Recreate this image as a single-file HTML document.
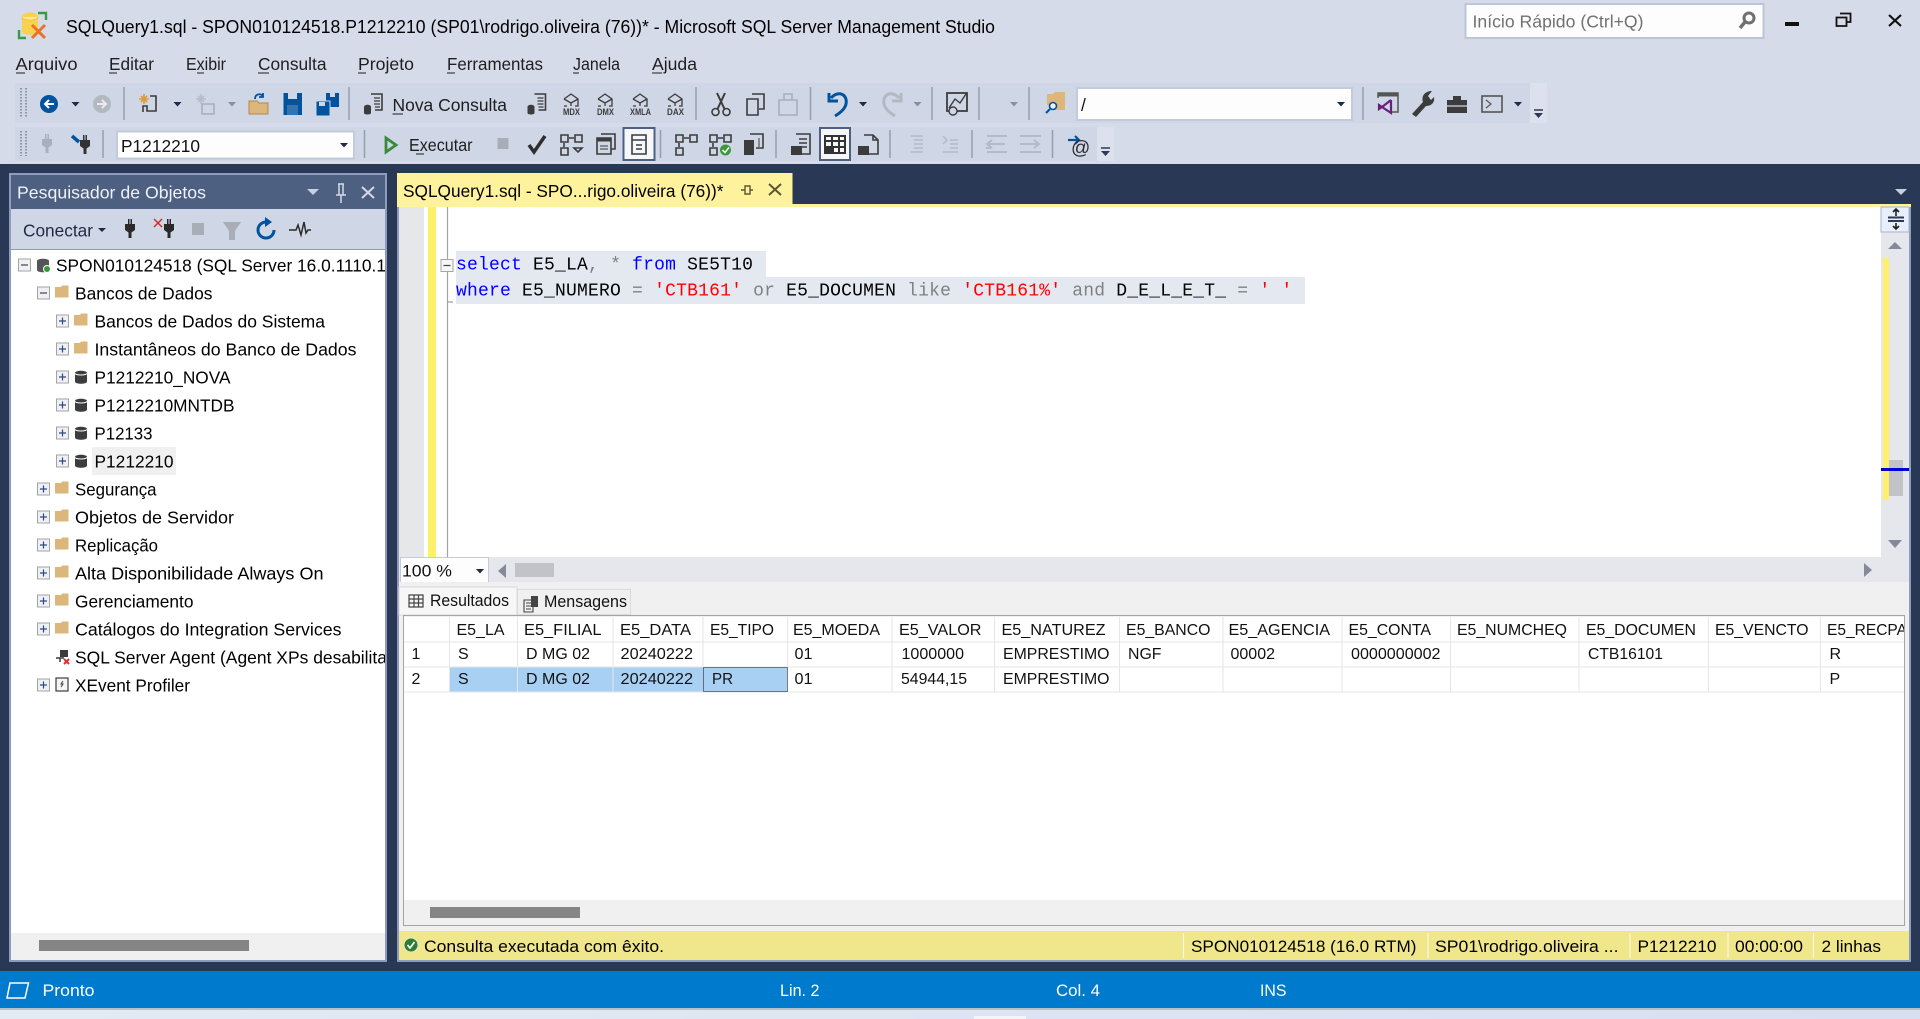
<!DOCTYPE html>
<html lang="pt">
<head>
<meta charset="utf-8">
<title>SQLQuery1.sql - Microsoft SQL Server Management Studio</title>
<style>
html,body{margin:0;padding:0;width:1920px;height:1019px;overflow:hidden;background:#d6dbe9}
svg{display:block;position:absolute;left:0;top:0}
text{font-family:"Liberation Sans",sans-serif;fill:#000;white-space:pre}
.ti{font-size:18px}
.m{font-size:17.5px;fill:#1e1e1e}
.tr{font-size:17.5px}
.g{font-size:16px;fill:#111}
.s{font-size:17px}
.w{font-size:17px;fill:#fff}
.c{font-family:"Liberation Mono",monospace;font-size:18px;letter-spacing:.2px}
.k{fill:#0000ff}.o{fill:#808080}.r{fill:#ff0000}
.ic{fill:none;stroke:#3c3c3c;stroke-width:1.6}
.dis{fill:none;stroke:#a9afbb;stroke-width:1.6}
.mini{font-size:9.500px;font-weight:bold;fill:#3c3c3c;font-family:"Liberation Sans",sans-serif}
</style>
</head>
<body>
<svg width="1920" height="1019" viewBox="0 0 1920 1019" xmlns="http://www.w3.org/2000/svg">
<defs>
<linearGradient id="desk" x1="0" x2="1" y1="0" y2="0"><stop offset="0" stop-color="#e2ebf4"/><stop offset="1" stop-color="#d8dff0"/></linearGradient>
<clipPath id="treeclip"><rect x="12" y="250" width="373" height="680"/></clipPath>
<clipPath id="gridclip"><rect x="403" y="617" width="1501" height="283"/></clipPath>
<g id="plus"><rect x="-6" y="-6" width="12" height="12" fill="#eef0f5" stroke="#a3a3a3"/><path d="M-3.5 0H3.5M0-3.5V3.5" stroke="#2c4a80" stroke-width="1.2"/></g>
<g id="minus"><rect x="-6" y="-6" width="12" height="12" fill="#eef0f5" stroke="#a3a3a3"/><path d="M-3.5 0H3.5" stroke="#444" stroke-width="1.2"/></g>
<path id="folder" d="M-7-5H-1L0-6.500H6.500V5.500H-7Z" fill="#dcb67a"/>
<g id="db"><path d="M-6-4C-6-7 6-7 6-4V4.500C6 7.500-6 7.500-6 4.500Z" fill="#3c3c3c"/><path d="M-6-3.500C-4-1.500 4-1.500 6-3.500" stroke="#fff" fill="none" stroke-width="1"/></g>
<path id="dn" d="M-4-2H4L0 2.500Z" fill="#1e2b45"/>
<path id="dndis" d="M-4-2H4L0 2.500Z" fill="#8a8f9c"/>
<g id="plug"><path d="M-5-5H-2V-10H-.5V-5H.5V-10H2V-5H5V1L1.500 3.500V9H-1.500V3.500L-5 1Z"/></g>
<g id="cube"><path d="M-7-4L0-9L7-4V3H4M-4 3H-7ZM-7-4L0 0L7-4M0 0V3" fill="none" stroke="#3c3c3c" stroke-width="1.300"/></g>
</defs>

<rect width="1920" height="1019" fill="#d6dbe9"/>

<!-- Title bar -->
<g>
<path d="M22 17C22 11 38 11 38 17V31C38 36 22 36 22 31Z" fill="#f8d24b"/>
<path d="M22 17C22 21 38 21 38 17" fill="#fbe69a" stroke="#e9b530" stroke-width=".6"/>
<path d="M38 13H46V20M19 30V38H26" fill="none" stroke="#3a9a46" stroke-width="2.4"/>
<path d="M32 25L45 38M45 25L32 38" stroke="#e8722a" stroke-width="3"/>
</g>
<text class="ti" x="66" y="33" textLength="929" lengthAdjust="spacingAndGlyphs">SQLQuery1.sql - SPON010124518.P1212210 (SP01\rodrigo.oliveira (76))* - Microsoft SQL Server Management Studio</text>

<rect x="1465.500" y="4" width="298" height="34" fill="#fdfdfe" stroke="#bcc5d8" stroke-width="2"/>
<text class="m" style="fill:#717171" x="1472.500" y="27.500" textLength="171" lengthAdjust="spacingAndGlyphs">Início Rápido (Ctrl+Q)</text>
<circle cx="1749" cy="18" r="5" fill="none" stroke="#6f6f6f" stroke-width="3"/><path d="M1745 22L1740 28" stroke="#6f6f6f" stroke-width="3.500"/>
<rect x="1785" y="22" width="14" height="4" fill="#111"/>
<path d="M1840 13.500H1850.500V22H1847M1836.500 17.500H1846.500V26H1836.500Z" fill="none" stroke="#111" stroke-width="1.800"/>
<path d="M1889 15L1901 26M1901 15L1889 26" stroke="#111" stroke-width="2.200"/>

<!-- Menu -->
<g class="menu">
<text class="m" x="15.500" y="70" textLength="62" lengthAdjust="spacingAndGlyphs">Arquivo</text>
<text class="m" x="109" y="70" textLength="45" lengthAdjust="spacingAndGlyphs">Editar</text>
<text class="m" x="186" y="70" textLength="40" lengthAdjust="spacingAndGlyphs">Exibir</text>
<text class="m" x="258" y="70" textLength="68.500" lengthAdjust="spacingAndGlyphs">Consulta</text>
<text class="m" x="358" y="70" textLength="56" lengthAdjust="spacingAndGlyphs">Projeto</text>
<text class="m" x="447" y="70" textLength="96" lengthAdjust="spacingAndGlyphs">Ferramentas</text>
<text class="m" x="573" y="70" textLength="47" lengthAdjust="spacingAndGlyphs">Janela</text>
<text class="m" x="652" y="70" textLength="45" lengthAdjust="spacingAndGlyphs">Ajuda</text>
<path d="M16 73H25M109 73H117M197 73H204M258 73H269M358 73H366M447 73H455M573 73H579M652 73H662" stroke="#1e1e1e" stroke-width="1"/>
</g>

<!-- Toolbar 1 -->
<rect x="15" y="83" width="1515" height="40" fill="#cfd6e5"/>
<rect x="1530" y="83" width="17" height="40" fill="#dde1ee"/>
<path d="M21 88V117M26 88V117" stroke="#8e95a6" stroke-width="2" stroke-dasharray="1.500 1.500"/>
<circle cx="49" cy="104" r="9" fill="#00539c"/><path d="M54 104H45M49 100L45 104L49 108" fill="none" stroke="#fff" stroke-width="2"/>
<use href="#dn" x="75.500" y="104"/>
<circle cx="102" cy="104" r="9" fill="#b3b8c1"/><path d="M97 104H106M102 100L106 104L102 108" fill="none" stroke="#e8eaef" stroke-width="2"/>
<path d="M124 87V120M349 87V120M696 87V120M810.500 87V120M932 87V120M979 87V120M1029 87V120M1363 87V120" stroke="#94a0b4" stroke-width="1.500"/>
<!-- new project -->
<g transform="translate(149,104)"><path d="M-8-8L-2-2M-8-2L-2-8M-5-10V0M-10-5H0" stroke="#dd9b3c" stroke-width="1.600"/><path d="M1-8H7V7H-2V2H-6V8" class="ic"/></g>
<use href="#dn" x="177.500" y="104"/>
<g transform="translate(206,104)"><path d="M-8-8L-2-2M-8-2L-2-8M-5-10V0M-10-5H0" stroke="#b8bec9" stroke-width="1.600"/><path d="M-4 0H8V10H-4Z" class="dis"/></g>
<use href="#dndis" x="232" y="104"/>
<g transform="translate(259,105)"><path d="M-10 9V-4H-2L0-2H9V9Z" fill="#dcb67a" stroke="#b08a4c"/><path d="M-4-6C-4-11 1-12 4-9M4-12V-8H0" fill="none" stroke="#00539c" stroke-width="1.800"/></g>
<path d="M283.500 93H302V115H283.500Z" fill="#00539c"/><rect x="288" y="93" width="9" height="6" fill="#cfd6e5"/><rect x="287" y="105" width="11" height="10" fill="#cfd6e5" opacity=".25"/>
<path d="M326 93H339V107H326Z" fill="#00539c"/><path d="M316 101H330V116H316Z" fill="#00539c" stroke="#cfd6e5"/><rect x="330" y="93" width="5" height="4" fill="#cfd6e5"/><rect x="319" y="102" width="6" height="4" fill="#cfd6e5"/>
<!-- Nova Consulta -->
<g transform="translate(374,104)"><path d="M-3-10H8V6H1" fill="none" stroke="#3c3c3c" stroke-width="1.600"/><path d="M0-6H6M0-3H6M0 0H6M1 3H6" stroke="#3c3c3c" stroke-width="1.300"/><path d="M-10 3C-10 0-3 0-3 3V9C-3 11-10 11-10 9Z" fill="#3c3c3c"/></g>
<text class="m" x="392.500" y="111" textLength="114.500" lengthAdjust="spacingAndGlyphs">Nova Consulta</text>
<path d="M392.500 114H403" stroke="#1e1e1e"/>
<g transform="translate(537.500,104)"><path d="M-3-10H8V6H1" fill="none" stroke="#3c3c3c" stroke-width="1.600"/><path d="M0-6H6M0-3H6M0 0H6M1 3H6" stroke="#3c3c3c" stroke-width="1.300"/><path d="M-10 3C-10 0-3 0-3 3V9C-3 11-10 11-10 9Z" fill="#3c3c3c"/></g>
<use href="#cube" x="571" y="103"/><text class="mini" x="563" y="115" textLength="17" lengthAdjust="spacingAndGlyphs">MDX</text>
<use href="#cube" x="605" y="103"/><text class="mini" x="597" y="115" textLength="17" lengthAdjust="spacingAndGlyphs">DMX</text>
<use href="#cube" x="640" y="103"/><text class="mini" x="630" y="115" textLength="21" lengthAdjust="spacingAndGlyphs">XMLA</text>
<use href="#cube" x="675" y="103"/><text class="mini" x="667" y="115" textLength="17" lengthAdjust="spacingAndGlyphs">DAX</text>
<g transform="translate(721,104)"><circle cx="-5.500" cy="8" r="3.500" class="ic"/><circle cx="5.500" cy="8" r="3.500" class="ic"/><path d="M-3.500 5L4-11M3.500 5L-4-11" stroke="#3c3c3c" stroke-width="2"/></g>
<path d="M752 94H764V109H759M747 99H758V115H747Z" class="ic"/>
<path d="M779 100H797V115H779ZM784 100V94H792V100" class="dis"/>
<path d="M831 98C838 90 848 94 846 104C845 109 840 113 835 116M829 93V101H838" fill="none" stroke="#00539c" stroke-width="3"/>
<use href="#dn" x="863" y="104"/>
<path d="M899 98C892 90 882 94 884 104C885 109 890 113 895 116M901 93V101H892" fill="none" stroke="#b3b8c1" stroke-width="3"/>
<use href="#dndis" x="917.500" y="104"/>
<rect x="947" y="93" width="20" height="18" fill="none" stroke="#3c3c3c" stroke-width="1.800"/>
<path d="M949 108L955 99L960 103L966 94" fill="none" stroke="#3c3c3c" stroke-width="1.400"/>
<circle cx="953" cy="111" r="4" fill="#cfd6e5" stroke="#3c3c3c" stroke-width="1.400"/>
<use href="#dndis" x="1014" y="104"/>
<path d="M1047 94H1053L1055 92H1065V110H1053V105H1047Z" fill="#dcb67a"/>
<circle cx="1053" cy="106" r="3.500" fill="#eef0f5" stroke="#00539c" stroke-width="1.600"/><path d="M1050 109L1046 113" stroke="#00539c" stroke-width="2"/>
<rect x="1077" y="88" width="275" height="32" fill="#fdfdfe" stroke="#c2cadc" stroke-width="2"/>
<text class="m" x="1081" y="111" style="fill:#111">/</text>
<use href="#dn" x="1341" y="104"/>
<g transform="translate(1388,104)"><path d="M-10-6V-11H10V8H4" fill="none" stroke="#555" stroke-width="1.500"/><rect x="-10" y="-11" width="20" height="3.500" fill="#555"/><path d="M3-4V9L-9 1V5L-4 1.500L3-4" fill="none" stroke="#68217a" stroke-width="2.200"/></g>
<path d="M1412 114L1423 102C1421 96 1425 91 1432 91L1428 96L1431 100L1434 97C1435 103 1431 106 1426 106L1416 117Z" fill="#3c3c3c"/>
<path d="M1447 100H1467V113H1447ZM1453 100V96H1461V100" fill="#3c3c3c"/><path d="M1447 106H1467" stroke="#cfd6e5" stroke-width="1.300"/>
<rect x="1482" y="96" width="20" height="16" fill="none" stroke="#555" stroke-width="1.600"/><path d="M1486 100L1491 104L1486 108" fill="none" stroke="#555" stroke-width="1.200"/>
<use href="#dn" x="1518" y="104"/>
<path d="M1534 110H1543" stroke="#2c3a55" stroke-width="1.500"/><path d="M1534 113H1543L1538.500 118Z" fill="#2c3a55"/>

<!-- Toolbar 2 -->
<rect x="15" y="127" width="1082" height="34" fill="#cfd6e5"/>
<rect x="1097" y="127" width="17" height="34" fill="#dde1ee"/>
<path d="M21 131V156M26 131V156" stroke="#8e95a6" stroke-width="2" stroke-dasharray="1.500 1.500"/>
<use href="#plug" x="47" y="144" fill="#aab0bb"/>
<use href="#plug" x="85" y="145" fill="#333"/><path d="M72 136L79 142" stroke="#00539c" stroke-width="3.500"/>
<path d="M103 130V158M364.500 130V158M660.500 130V158M776 130V158M890 130V158M972 130V158M1052.500 130V158" stroke="#94a0b4" stroke-width="1.500"/>
<rect x="117" y="131.500" width="237" height="27" fill="#fdfdfe" stroke="#c2cadc" stroke-width="2"/>
<text class="m" style="fill:#111" x="121" y="152" textLength="79" lengthAdjust="spacingAndGlyphs">P1212210</text>
<use href="#dn" x="344" y="145"/>
<path d="M386 138L396 145L386 152Z" fill="none" stroke="#3a8a3a" stroke-width="2.800"/>
<text class="m" x="409" y="151" textLength="63.500" lengthAdjust="spacingAndGlyphs">Executar</text><path d="M416 154H424" stroke="#1e1e1e"/>
<rect x="497.500" y="138" width="11" height="11" fill="#a8adb7"/>
<path d="M529 145L534 152L545 136" fill="none" stroke="#2e2e2e" stroke-width="3.500"/>
<path d="M561 135H568V142H561ZM575 135H582V142H575ZM561 148H568V155H561ZM564 147V143M569 138H574" class="ic" stroke-width="1.300"/><path d="M574 148H582L578 152Z" class="ic" stroke-width="1.300"/>
<path d="M601 134H615V149H611M597 138H611V154H597Z" class="ic"/><rect x="597" y="138" width="14" height="3.500" fill="#3c3c3c"/><path d="M600 146H608M600 149H608" stroke="#3c3c3c"/>
<rect x="623.500" y="128" width="31" height="32" fill="#f6f7fa" stroke="#4d6082" stroke-width="2"/>
<path d="M632 135H646V154H632ZM632 140H646M636 145H642M636 149H642" class="ic" stroke-width="1.400"/>
<path d="M676 135H683V142H676ZM690 135H697V142H690ZM676 148H683V155H676ZM679 147V143M684 138H689" class="ic" stroke-width="1.300"/>
<path d="M710 135H717V142H710ZM724 135H731V142H724ZM710 148H717V155H710ZM713 147V143M718 138H723" class="ic" stroke-width="1.300"/>
<circle cx="725.500" cy="150" r="5.500" fill="#3a9a3a"/><path d="M722.500 150L725 152.500L729 147.500" fill="none" stroke="#fff" stroke-width="1.500"/>
<rect x="744" y="140" width="10" height="15" fill="#3c3c3c"/><path d="M750 134H763V148H756" class="ic"/><path d="M759 138V147" stroke="#3c3c3c"/>
<path d="M796 134H810V154H801M799 139H807M799 143H807M799 147H807" class="ic" stroke-width="1.300"/><rect x="791" y="146" width="11" height="9" fill="#3c3c3c"/>
<rect x="820" y="128" width="30" height="32" fill="#f6f7fa" stroke="#4d6082" stroke-width="2"/>
<path d="M825 136H845V153H825ZM825 141H845M825 147H845M832 136V153M839 136V153" fill="none" stroke="#333" stroke-width="2"/><rect x="825" y="147" width="9" height="7" fill="#333"/>
<path d="M864 135H873L878 140V154H869M873 135V140H878" class="ic"/><rect x="858" y="146" width="11" height="9" fill="#3c3c3c"/>
<path d="M911 136H923M914 140H923M914 144H923M914 148H923M911 152H923" stroke="#b4bac6" stroke-width="1.500"/>
<path d="M943 136L947 140L943 144M950 140H958M950 144H958M950 148H958M943 152H958" fill="none" stroke="#b4bac6" stroke-width="1.500"/>
<path d="M987 136H1007M987 152H1007M987 144H1005M992 140L987 144L992 148M991 148H986" fill="none" stroke="#b4bac6" stroke-width="2"/>
<path d="M1020 136H1041M1020 152H1041M1020 144H1038M1034 140L1039 144L1034 148" fill="none" stroke="#b4bac6" stroke-width="2"/>
<path d="M1068 140H1079M1075 136L1079 140L1075 144" fill="none" stroke="#00539c" stroke-width="2.200"/>
<text x="1071" y="154" style="font-size:19px;fill:#2e2e2e">@</text>
<path d="M1101 148H1110" stroke="#2c3a55" stroke-width="1.500"/><path d="M1101 151H1110L1105.500 156Z" fill="#2c3a55"/>

<!-- Dark main background -->
<rect x="0" y="164" width="1920" height="807" fill="#293955"/>

<!-- Object Explorer -->
<rect x="9" y="173" width="378" height="789" fill="#8d9cbd"/>
<rect x="11" y="175" width="374" height="34" fill="#4d6082"/>
<text class="tr" style="fill:#eef1f7" x="17" y="198.500" textLength="189" lengthAdjust="spacingAndGlyphs">Pesquisador de Objetos</text>
<path d="M307 189H319L313 195Z" fill="#c9d0df"/>
<path d="M338 184H344M339 184V195H343V184M336 195H346M341 195V203" fill="none" stroke="#d5dae6" stroke-width="1.500"/>
<path d="M362 187L374 198M374 187L362 198" stroke="#d5dae6" stroke-width="2"/>
<rect x="11" y="209" width="374" height="40" fill="#cfd6e5"/>
<text class="m" style="fill:#1e2b45" x="23" y="236.500" textLength="70" lengthAdjust="spacingAndGlyphs">Conectar</text>
<path d="M98 228H106L102 232Z" fill="#1e2b45"/>
<use href="#plug" x="130" y="229" fill="#2a2a2a"/>
<use href="#plug" x="169" y="229" fill="#2a2a2a"/><path d="M154 219L162 227M162 219L154 227" stroke="#c9302c" stroke-width="1.500"/>
<rect x="192" y="223" width="12" height="12" fill="#a8adb7"/>
<path d="M223 222H241L235 231V240H229V231Z" fill="#a8adb7"/>
<path d="M274 230A8 8 0 1 1 266 222" fill="none" stroke="#00539c" stroke-width="3"/><path d="M265 217L272 222L265 227Z" fill="#00539c"/>
<path d="M289 230H296L298 225L301 235L304 222L306 233L308 230H311" fill="none" stroke="#2a2a2a" stroke-width="1.500"/>
<rect x="11" y="250" width="374" height="683" fill="#fff"/>
<rect x="11" y="933" width="374" height="27" fill="#f0f0f0"/>
<rect x="39" y="940" width="210" height="11" fill="#858585"/>

<!-- Tree -->
<use href="#minus" x="24.500" y="265"/>
<g transform="translate(43,265)"><path d="M-6-4C-6-7 6-7 6-4V5C6 8-6 8-6 5Z" fill="#555"/><circle cx="4" cy="4" r="4" fill="#fff"/><circle cx="4" cy="4" r="3" fill="#3a9a3a"/></g>
<use href="#minus" x="43.500" y="293"/><use href="#folder" x="62" y="292"/>
<use href="#plus" x="62.500" y="321"/><use href="#folder" x="81" y="320"/>
<use href="#plus" x="62.500" y="349"/><use href="#folder" x="81" y="348"/>
<use href="#plus" x="62.500" y="377"/><use href="#db" x="81" y="377"/>
<use href="#plus" x="62.500" y="405"/><use href="#db" x="81" y="405"/>
<use href="#plus" x="62.500" y="433"/><use href="#db" x="81" y="433"/>
<use href="#plus" x="62.500" y="461"/><use href="#db" x="81" y="461"/>
<rect x="92" y="447" width="84" height="28" fill="#f0f0f0"/>
<use href="#plus" x="43.500" y="489"/><use href="#folder" x="62" y="488"/>
<use href="#plus" x="43.500" y="517"/><use href="#folder" x="62" y="516"/>
<use href="#plus" x="43.500" y="545"/><use href="#folder" x="62" y="544"/>
<use href="#plus" x="43.500" y="573"/><use href="#folder" x="62" y="572"/>
<use href="#plus" x="43.500" y="601"/><use href="#folder" x="62" y="600"/>
<use href="#plus" x="43.500" y="629"/><use href="#folder" x="62" y="628"/>
<g transform="translate(62,657)"><rect x="-2" y="-7" width="8" height="7" fill="#3c3c3c"/><path d="M-6 1H2M-2 1V5" stroke="#3c3c3c" stroke-width="1.500"/><path d="M2 2L7 7M7 2L2 7" stroke="#e03030" stroke-width="2"/></g>
<use href="#plus" x="43.500" y="685"/><g transform="translate(62,685)"><rect x="-6" y="-7" width="12" height="13" fill="#f5f5f5" stroke="#3c3c3c" stroke-width="1.200"/><path d="M1-4L-1-1H1L-1 2" stroke="#3c3c3c" fill="none"/></g>
<g clip-path="url(#treeclip)">
<g transform="translate(0,.5)">
<text class="tr" x="56" y="271" textLength="330" lengthAdjust="spacingAndGlyphs">SPON010124518 (SQL Server 16.0.1110.1</text>
<text class="tr" x="75" y="299" textLength="137.500" lengthAdjust="spacingAndGlyphs">Bancos de Dados</text>
<text class="tr" x="94.500" y="327" textLength="230.500" lengthAdjust="spacingAndGlyphs">Bancos de Dados do Sistema</text>
<text class="tr" x="94.500" y="355" textLength="262" lengthAdjust="spacingAndGlyphs">Instantâneos do Banco de Dados</text>
<text class="tr" x="94.500" y="383" textLength="136" lengthAdjust="spacingAndGlyphs">P1212210_NOVA</text>
<text class="tr" x="94.500" y="411" textLength="140" lengthAdjust="spacingAndGlyphs">P1212210MNTDB</text>
<text class="tr" x="94.500" y="439" textLength="58" lengthAdjust="spacingAndGlyphs">P12133</text>
<text class="tr" x="94.500" y="467" textLength="79" lengthAdjust="spacingAndGlyphs">P1212210</text>
<text class="tr" x="75" y="495" textLength="81.500" lengthAdjust="spacingAndGlyphs">Segurança</text>
<text class="tr" x="75" y="523" textLength="159" lengthAdjust="spacingAndGlyphs">Objetos de Servidor</text>
<text class="tr" x="75" y="551" textLength="83" lengthAdjust="spacingAndGlyphs">Replicação</text>
<text class="tr" x="75" y="579" textLength="248.500" lengthAdjust="spacingAndGlyphs">Alta Disponibilidade Always On</text>
<text class="tr" x="75" y="607" textLength="118.500" lengthAdjust="spacingAndGlyphs">Gerenciamento</text>
<text class="tr" x="75" y="635" textLength="266.500" lengthAdjust="spacingAndGlyphs">Catálogos do Integration Services</text>
<text class="tr" x="75" y="663" textLength="312" lengthAdjust="spacingAndGlyphs">SQL Server Agent (Agent XPs desabilita</text>
<text class="tr" x="75" y="691" textLength="115" lengthAdjust="spacingAndGlyphs">XEvent Profiler</text>
</g>
</g>

<!-- Document area -->
<rect x="397" y="204" width="1514" height="3" fill="#fff29d"/>
<rect x="397" y="173" width="395.500" height="34" fill="#fff29d"/>
<text class="tr" x="403" y="197" textLength="320.500" lengthAdjust="spacingAndGlyphs">SQLQuery1.sql - SPO...rigo.oliveira (76))*</text>
<path d="M741 190H745M745 186V194H750V186ZM750 190H753" fill="none" stroke="#5c5632" stroke-width="1.400"/>
<path d="M769 184L781 195M781 184L769 195" stroke="#5c5632" stroke-width="2"/>
<path d="M1895 189H1907L1901 195Z" fill="#c9d0df"/>

<rect x="397" y="207" width="1514" height="755" fill="#8d9cbd"/>
<rect x="399" y="207" width="1510" height="350" fill="#fff"/>
<rect x="399" y="207" width="25" height="350" fill="#e6e7e8"/>
<rect x="428" y="207" width="8" height="350" fill="#fff06a"/>
<path d="M447.500 207V259M447.500 271V557M447.500 302H453" stroke="#a5a5a5" stroke-width="1.200"/>
<rect x="456" y="251" width="310" height="26" fill="#e4e8f0"/>
<rect x="456" y="277" width="849" height="27" fill="#e4e8f0"/>
<rect x="441" y="259.500" width="12" height="12" fill="#f7f7f7" stroke="#a5a5a5"/><path d="M443.500 265.500H450.500" stroke="#444" stroke-width="1.200"/>
<text class="c" x="456" y="269.500" xml:space="preserve"><tspan class="k">select</tspan> E5_LA<tspan class="o">,</tspan> <tspan class="o">*</tspan> <tspan class="k">from</tspan> SE5T10</text>
<text class="c" x="456" y="295.500" xml:space="preserve"><tspan class="k">where</tspan> E5_NUMERO <tspan class="o">=</tspan> <tspan class="r">'CTB161'</tspan> <tspan class="o">or</tspan> E5_DOCUMEN <tspan class="o">like</tspan> <tspan class="r">'CTB161%'</tspan> <tspan class="o">and</tspan> D_E_L_E_T_ <tspan class="o">=</tspan> <tspan class="r">' '</tspan></text>

<!-- Vertical scrollbar -->
<rect x="1881" y="207" width="28" height="350" fill="#e6e7ed"/>
<rect x="1881" y="207" width="28" height="25" fill="#e8effc" stroke="#a9b3c9"/>
<path d="M1888 217.500H1904M1888 221H1904" stroke="#2c3a55" stroke-width="2"/>
<path d="M1896 209V216M1893 212L1896 209L1899 212M1896 223V229M1893 226L1896 229L1899 226" fill="none" stroke="#1e1e1e" stroke-width="1.600"/>
<path d="M1888 249H1902L1895 242Z" fill="#868999"/>
<rect x="1883" y="258" width="6" height="241" fill="#fff06a"/>
<rect x="1889" y="460" width="14" height="36" fill="#c2c3c9"/>
<rect x="1881" y="468" width="28" height="3" fill="#0000d0"/>
<path d="M1888 540H1902L1895 548Z" fill="#868999"/>

<!-- Horizontal scroll row -->
<rect x="399" y="557" width="1510" height="25" fill="#e6e7ed"/>
<rect x="400.500" y="557.500" width="88" height="25" fill="#fdfdfe" stroke="#c2cadc"/>
<text class="m" style="fill:#111;font-size:16.500px" x="402" y="576.500" textLength="50" lengthAdjust="spacingAndGlyphs">100 %</text>
<use href="#dn" x="480" y="571"/>
<path d="M506 564V578L498 571Z" fill="#868999"/>
<rect x="515" y="563" width="39" height="14" fill="#c2c3c9"/>
<path d="M1864 563V577L1872 570Z" fill="#868999"/>

<!-- Results -->
<rect x="399" y="582" width="1510" height="349" fill="#f0f0f0"/>
<rect x="399" y="587" width="118" height="28" fill="#f7f7f7" stroke="#dadada"/>
<rect x="517.500" y="589.500" width="113" height="25" fill="#f0f0f0" stroke="#dadada"/>
<path d="M409 595H423V607H409ZM409 599H423M409 603H423M414 595V607M418.500 595V607" fill="none" stroke="#444" stroke-width="1.200"/>
<text class="m" style="fill:#111;font-size:16.500px" x="430" y="606" textLength="79" lengthAdjust="spacingAndGlyphs">Resultados</text>
<path d="M524 600H533V612H524ZM526 603H531M526 606H531M526 609H531" fill="none" stroke="#444" stroke-width="1.100"/><rect x="531" y="596" width="7" height="11" fill="#444"/>
<text class="m" style="fill:#111;font-size:16.500px" x="544" y="607" textLength="83" lengthAdjust="spacingAndGlyphs">Mensagens</text>

<rect x="403.500" y="615.500" width="1501" height="310" fill="#f0f0f0" stroke="#a5a5a5"/>
<rect x="404" y="617" width="1500" height="283" fill="#fff"/>
<rect x="430" y="907" width="150" height="11" fill="#868686"/>

<rect x="450" y="667" width="253" height="25" fill="#a8d0f2"/>
<rect x="703" y="667" width="84.500" height="25" fill="#a8d0f2"/>
<path d="M404 642H1904M404 667H1904M404 692H1904M449.500 617V692M517.500 617V692M613 617V692M703 617V667M787.500 617V692M892 617V692M994.500 617V692M1119.500 617V692M1223 617V692M1342 617V692M1450.500 617V692M1579 617V692M1708.500 617V692M1820.500 617V692" stroke="#e6e6e6" stroke-width="1"/>
<rect x="703.500" y="667.500" width="84" height="24" fill="none" stroke="#111" stroke-dasharray="1 1"/>
<g clip-path="url(#gridclip)">
<text class="g" x="456.500" y="635" textLength="48" lengthAdjust="spacingAndGlyphs">E5_LA</text>
<text class="g" x="524" y="635" textLength="77.500" lengthAdjust="spacingAndGlyphs">E5_FILIAL</text>
<text class="g" x="620" y="635" textLength="71" lengthAdjust="spacingAndGlyphs">E5_DATA</text>
<text class="g" x="710" y="635" textLength="64" lengthAdjust="spacingAndGlyphs">E5_TIPO</text>
<text class="g" x="793" y="635" textLength="87" lengthAdjust="spacingAndGlyphs">E5_MOEDA</text>
<text class="g" x="899" y="635" textLength="82.500" lengthAdjust="spacingAndGlyphs">E5_VALOR</text>
<text class="g" x="1001.500" y="635" textLength="104" lengthAdjust="spacingAndGlyphs">E5_NATUREZ</text>
<text class="g" x="1126" y="635" textLength="84.500" lengthAdjust="spacingAndGlyphs">E5_BANCO</text>
<text class="g" x="1228.500" y="635" textLength="101.500" lengthAdjust="spacingAndGlyphs">E5_AGENCIA</text>
<text class="g" x="1348.500" y="635" textLength="82.500" lengthAdjust="spacingAndGlyphs">E5_CONTA</text>
<text class="g" x="1457" y="635" textLength="110" lengthAdjust="spacingAndGlyphs">E5_NUMCHEQ</text>
<text class="g" x="1586" y="635" textLength="110" lengthAdjust="spacingAndGlyphs">E5_DOCUMEN</text>
<text class="g" x="1715" y="635" textLength="93.500" lengthAdjust="spacingAndGlyphs">E5_VENCTO</text>
<text class="g" x="1827" y="635" textLength="80" lengthAdjust="spacingAndGlyphs">E5_RECPA</text>

<text class="g" x="411.500" y="659">1</text>
<text class="g" x="458" y="659">S</text>
<text class="g" x="526" y="659" textLength="64" lengthAdjust="spacingAndGlyphs">D MG 02</text>
<text class="g" x="620.500" y="659" textLength="72.500" lengthAdjust="spacingAndGlyphs">20240222</text>
<text class="g" x="794.500" y="659" textLength="18" lengthAdjust="spacingAndGlyphs">01</text>
<text class="g" x="901.500" y="659" textLength="62.500" lengthAdjust="spacingAndGlyphs">1000000</text>
<text class="g" x="1003" y="659" textLength="106.500" lengthAdjust="spacingAndGlyphs">EMPRESTIMO</text>
<text class="g" x="1128" y="659" textLength="33.500" lengthAdjust="spacingAndGlyphs">NGF</text>
<text class="g" x="1230.500" y="659" textLength="44.500" lengthAdjust="spacingAndGlyphs">00002</text>
<text class="g" x="1351" y="659" textLength="89.500" lengthAdjust="spacingAndGlyphs">0000000002</text>
<text class="g" x="1588" y="659" textLength="75" lengthAdjust="spacingAndGlyphs">CTB16101</text>
<text class="g" x="1829.500" y="659">R</text>

<text class="g" x="411.500" y="684">2</text>
<text class="g" x="458" y="684">S</text>
<text class="g" x="526" y="684" textLength="64" lengthAdjust="spacingAndGlyphs">D MG 02</text>
<text class="g" x="620.500" y="684" textLength="72.500" lengthAdjust="spacingAndGlyphs">20240222</text>
<text class="g" x="712" y="684" textLength="21" lengthAdjust="spacingAndGlyphs">PR</text>
<text class="g" x="794.500" y="684" textLength="18" lengthAdjust="spacingAndGlyphs">01</text>
<text class="g" x="901" y="684" textLength="66" lengthAdjust="spacingAndGlyphs">54944,15</text>
<text class="g" x="1003" y="684" textLength="106.500" lengthAdjust="spacingAndGlyphs">EMPRESTIMO</text>
<text class="g" x="1829.500" y="684">P</text>
</g>

<!-- Query status bar -->
<rect x="399" y="931" width="1510" height="29" fill="#f0e68c"/>
<circle cx="411" cy="945" r="7" fill="#2e7d32" stroke="#dfe8d0"/><path d="M407.500 945L410 948L414.500 942" fill="none" stroke="#fff" stroke-width="1.700"/>
<text class="s" x="424" y="952" textLength="240" lengthAdjust="spacingAndGlyphs">Consulta executada com êxito.</text>
<path d="M1183.500 933V958M1428 933V958M1630 933V958M1728 933V958M1813.500 933V958" stroke="#fbf8dc" stroke-width="1.200"/>
<text class="s" x="1191" y="952" textLength="225.500" lengthAdjust="spacingAndGlyphs">SPON010124518 (16.0 RTM)</text>
<text class="s" x="1435" y="952" textLength="183.500" lengthAdjust="spacingAndGlyphs">SP01\rodrigo.oliveira ...</text>
<text class="s" x="1637.500" y="952" textLength="79" lengthAdjust="spacingAndGlyphs">P1212210</text>
<text class="s" x="1735" y="952" textLength="68" lengthAdjust="spacingAndGlyphs">00:00:00</text>
<text class="s" x="1821.500" y="952" textLength="59.500" lengthAdjust="spacingAndGlyphs">2 linhas</text>

<!-- App status bar -->
<rect x="0" y="971" width="1920" height="37" fill="#007acc"/>
<path d="M10 983H28.500L25 998H7Z" fill="none" stroke="#fff" stroke-width="1.500"/>
<text class="w" x="42.500" y="996" textLength="52" lengthAdjust="spacingAndGlyphs">Pronto</text>
<text class="w" x="780" y="996" textLength="39.500" lengthAdjust="spacingAndGlyphs">Lin. 2</text>
<text class="w" x="1056" y="996" textLength="44" lengthAdjust="spacingAndGlyphs">Col. 4</text>
<text class="w" x="1260" y="996" textLength="26.500" lengthAdjust="spacingAndGlyphs">INS</text>

<!-- Desktop sliver -->
<rect x="0" y="1008" width="1920" height="2" fill="#b9bfc7"/>
<rect x="0" y="1010" width="1920" height="9" fill="url(#desk)"/>
<rect x="974" y="1016" width="52" height="3" fill="#f3f5f9"/>
</svg>
</body>
</html>
